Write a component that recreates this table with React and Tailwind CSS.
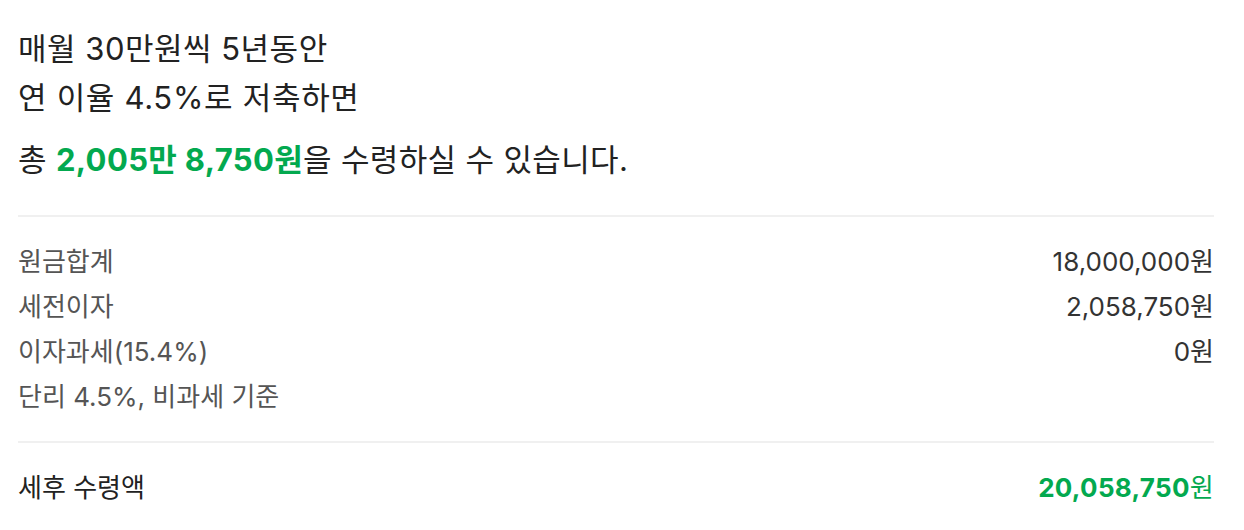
export default function App() {
  const font = { fontFamily: "Inter, 'Noto Sans CJK KR', sans-serif" };
  const rows = [
    ["원금합계", "18,000,000원"],
    ["세전이자", "2,058,750원"],
    ["이자과세(15.4%)", "0원"],
    ["단리 4.5%, 비과세 기준", ""],
  ];
  return (
    <div className="w-[1244px] h-[530px] bg-white pl-[18px] pr-[30px] pt-[24px]" style={font}>
      <div className="text-[31px] leading-[49px] text-[#222222] tracking-[0.5px]">
        <div>매월 30만원씩 5년동안</div>
        <div className="tracking-[0.7px]">연 이율 4.5%로 저축하면</div>
      </div>
      <div className="mt-[13px] text-[31px] leading-[49px] text-[#222222] tracking-[0.35px]">
        총 <span className="font-bold text-[#03a94f]">2,005만 8,750원</span>을 수령하실 수 있습니다.
      </div>
      <div className="mt-[31px] h-[2px] bg-[#f0f0f0]" />
      <div className="pt-[22px] pb-[22px] flex flex-col">
        {rows.map(([l, v]) => (
          <div key={l} className="flex justify-between items-center text-[26px] leading-[45px]">
            <span className="text-[#555555]">{l}</span>
            <span className="text-[#333333]">{v}</span>
          </div>
        ))}
      </div>
      <div className="h-[2px] bg-[#f0f0f0]" />
      <div className="pt-[22px] flex justify-between items-center text-[26px] leading-[45px]">
        <span className="text-[#222222]">세후 수령액</span>
        <span className="font-bold text-[#03a94f] tracking-[0.3px]">20,058,750<span className="font-normal">원</span></span>
      </div>
    </div>
  );
}
